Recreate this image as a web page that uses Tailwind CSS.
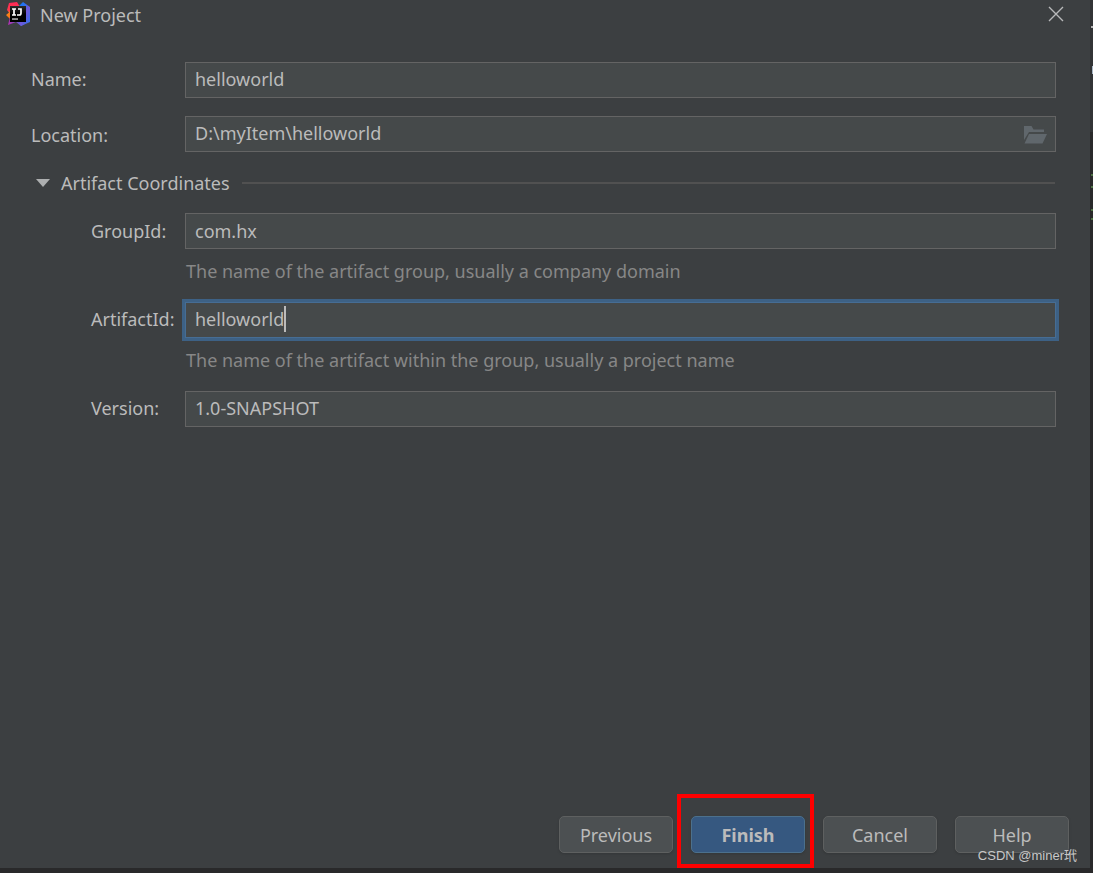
<!DOCTYPE html>
<html lang="en">
<head>
<meta charset="utf-8">
<meta name="viewport" content="width=device-width, initial-scale=1">
<title>New Project</title>
<script src="https://cdn.jsdelivr.net/npm/@tailwindcss/browser@4"></script>
</head>
<body class="relative flex min-h-screen bg-[#29292a] pr-[3px] pb-[5px] font-['Noto_Sans','Noto_Sans_CJK_SC',sans-serif] text-[18px] leading-6 text-[#bbbbbb]">
<!-- strip of the editor behind the dialog -->
<div class="absolute top-0 right-0 h-[132px] w-[3px] bg-[#323436]" aria-hidden="true">
  <div class="absolute top-[26px] right-0 h-[2px] w-[2px] bg-[#b0b0b0]"></div>
  <div class="absolute top-[66px] right-0 h-[8px] w-px bg-[#a9b7c6]"></div>
  <div class="absolute top-[174px] right-0 h-[14px] w-[2px] border-y-2 border-[#4d7044]"></div>
  <div class="absolute top-[209px] right-0 h-[11px] w-[2px] border-y-2 border-[#4d7044]"></div>
</div>
<main class="flex flex-1 flex-col bg-[#3c3f41]">
  <header class="flex h-[30px] items-center pl-[6px] pr-[26px]">
    <svg class="mb-[2px] h-6 w-6" viewBox="0 0 24 24" aria-hidden="true">
      <defs>
        <linearGradient id="warm" x1="0" y1="0" x2="0" y2="1"><stop offset="0" stop-color="#fe2857"/><stop offset=".5" stop-color="#fc3b4c"/><stop offset=".62" stop-color="#fc801d"/><stop offset="1" stop-color="#f97a12"/></linearGradient>
        <linearGradient id="cool" x1="0" y1="0" x2="1" y2="1"><stop offset="0" stop-color="#087cfa"/><stop offset=".35" stop-color="#2f70ee"/><stop offset=".55" stop-color="#7357d8"/><stop offset="1" stop-color="#2475ee"/></linearGradient>
        <linearGradient id="violet" x1="0" y1="0" x2="1" y2="0"><stop offset="0" stop-color="#b32eae"/><stop offset="1" stop-color="#3574f0"/></linearGradient>
        <linearGradient id="tile" x1="0" y1="0" x2="0" y2="1"><stop offset="0" stop-color="#2b2b2b"/><stop offset=".5" stop-color="#000"/></linearGradient>
      </defs>
      <path fill="url(#warm)" d="M3 1 11 0 14 5 8 17 4 17 0 13 3 10.500 1 8Z"/>
      <path fill="url(#violet)" d="M4 15 2 23 10 20 15 24 22 20 20 15Z"/>
      <path fill="url(#cool)" d="M12 5 17 0 24 5V20L15 24 12 19Z"/>
      <path fill="url(#tile)" d="M4 4h16v16H4z"/>
      <path fill="none" stroke="#fff" stroke-width="1.700" d="M6 7h4M8 7v6M6 13h4M12 7h3v4.300q0 1.700-1.700 1.700H11"/>
      <path fill="#b8b8b8" d="M6 16.300h6v1.500H6z"/>
    </svg>
    <h1 class="ml-[10px] flex-1">New Project</h1>
    <button type="button" aria-label="Close" class="mb-[2px]">
      <svg class="h-4 w-4" viewBox="0 0 16 16" fill="none" stroke="#b8b9ba" stroke-width="1.400"><path d="m1 1 14 14M15 1 1 15"/></svg>
    </button>
  </header>
  <form class="flex flex-1 flex-col pt-8">
    <div class="flex items-center pr-[34px] pl-[31px]">
      <label for="name" class="w-[154px] pb-[2px]">Name:</label>
      <input id="name" value="helloworld" class="h-9 min-w-0 flex-1 border border-[#646464] bg-[#45494a] px-[9px] pb-[2px] outline-none">
    </div>
    <div class="mt-[18px] flex items-center pr-[34px] pl-[31px]">
      <label for="location" class="w-[154px] pt-[2px]">Location:</label>
      <div class="flex h-9 min-w-0 flex-1 items-center border border-[#646464] bg-[#45494a] pr-2 pl-[9px]">
        <input id="location" value="D:\myItem\helloworld" class="min-w-0 flex-1 pb-[2px] outline-none">
        <button type="button" aria-label="Browse" class="pt-[2px]">
          <svg class="h-[18px] w-[23px]" viewBox="0 0 23 18" fill="#60676c"><path d="M0 0h7.500l2 3.500H20V6H5L0 14Z"/><path d="M5 8h18l-4.500 9.500H0.500Z"/></svg>
        </button>
      </div>
    </div>
    <div class="mt-[19px] flex items-center pr-[35px] pl-9">
      <button type="button" aria-expanded="true" class="flex items-center gap-[11px]">
        <svg class="h-2 w-[14px]" viewBox="0 0 14 8" fill="#adafb0"><path d="M0 0h14L7 8Z"/></svg>
        Artifact Coordinates
      </button>
      <div class="ml-3 h-[2px] flex-1 bg-[#515151]"></div>
    </div>
    <div class="mt-[18px] flex items-center pr-[34px] pl-[91px]">
      <label for="group" class="w-[94px]">GroupId:</label>
      <input id="group" value="com.hx" aria-describedby="group-hint" class="h-9 min-w-0 flex-1 border border-[#646464] bg-[#45494a] px-[9px] outline-none">
    </div>
    <p id="group-hint" class="mt-[10px] pl-[186px] text-[#878787]">The name of the artifact group, usually a company domain</p>
    <div class="mt-[19px] flex items-center pr-[34px] pl-[91px]">
      <label for="artifact" class="w-[94px] pb-[2px]">ArtifactId:</label>
      <div class="relative min-w-0 flex-1">
        <input id="artifact" value="helloworld" aria-describedby="artifact-hint" class="h-9 w-full border border-[#466d94] bg-[#45494a] px-[9px] pb-[2px] ring-3 ring-[#3d6185] outline-none">
        <span class="absolute top-1 left-[99px] h-[26px] w-[2px] bg-[#bbbbbb]" aria-hidden="true"></span>
      </div>
    </div>
    <p id="artifact-hint" class="mt-[10px] pl-[186px] text-[#878787]">The name of the artifact within the group, usually a project name</p>
    <div class="mt-[19px] flex items-center pr-[34px] pl-[91px]">
      <label for="version" class="w-[94px] pb-[2px]">Version:</label>
      <input id="version" value="1.0-SNAPSHOT" class="h-9 min-w-0 flex-1 border border-[#646464] bg-[#45494a] px-[9px] pb-[2px] outline-none">
    </div>
    <footer class="mt-auto flex justify-end gap-[18px] pr-[21px] pb-[15px]">
      <button type="button" class="h-[37px] w-[114px] rounded-[5px] border border-[#5e6060] bg-[#4c5052] shadow-sm">Previous</button>
      <div class="relative">
        <button type="submit" class="h-[37px] w-[114px] rounded-[5px] border border-[#4c708c] bg-[#365880] font-bold shadow-sm">Finish</button>
        <div class="pointer-events-none absolute -top-[22px] -right-[9px] -bottom-[15px] -left-[14px] border-4 border-[#ff0000]"></div>
      </div>
      <button type="button" class="h-[37px] w-[114px] rounded-[5px] border border-[#5e6060] bg-[#4c5052] shadow-sm">Cancel</button>
      <button type="button" class="h-[37px] w-[114px] rounded-[5px] border border-[#5e6060] bg-[#4c5052] shadow-sm">Help</button>
    </footer>
  </form>
</main>
<div class="pointer-events-none absolute right-4 bottom-[7px] font-['Liberation_Sans','Noto_Sans_CJK_SC',sans-serif] text-[13px] leading-5 text-[#c8c8c8]">CSDN @miner玳</div>
</body>
</html>
